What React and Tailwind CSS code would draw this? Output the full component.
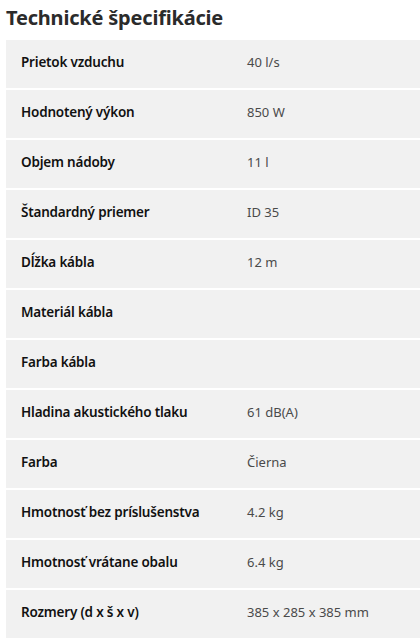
const specs = [
  ["Prietok vzduchu", "40 l/s"],
  ["Hodnotený výkon", "850 W"],
  ["Objem nádoby", "11 l"],
  ["Štandardný priemer", "ID 35"],
  ["Dĺžka kábla", "12 m"],
  ["Materiál kábla", ""],
  ["Farba kábla", ""],
  ["Hladina akustického tlaku", "61 dB(A)"],
  ["Farba", "Čierna"],
  ["Hmotnosť bez príslušenstva", "4.2 kg"],
  ["Hmotnosť vrátane obalu", "6.4 kg"],
  ["Rozmery (d x š x v)", "385 x 285 x 385 mm"],
];

export default function App() {
  return (
    <div className="w-[420px] h-[638px] overflow-hidden bg-white font-['Noto_Sans',sans-serif]">
      <h2 className="h-[40px] pl-[6px] pt-[1px] text-[20px] font-bold leading-[34px] tracking-[-0.2px] text-[#2b2b2b]">
        Technické špecifikácie
      </h2>
      <div className="ml-[6px] flex flex-col gap-[2px]">
        {specs.map(([label, value]) => (
          <div key={label} className="grid h-[48px] grid-cols-[241px_1fr] items-center bg-[#f1f1f1] pb-[3px]">
            <div className="pl-[15px] text-[13.5px] font-semibold tracking-[-0.2px] text-[#111]">{label}</div>
            <div className="text-[13px] text-[#4a4a4a]">{value}</div>
          </div>
        ))}
      </div>
    </div>
  );
}
